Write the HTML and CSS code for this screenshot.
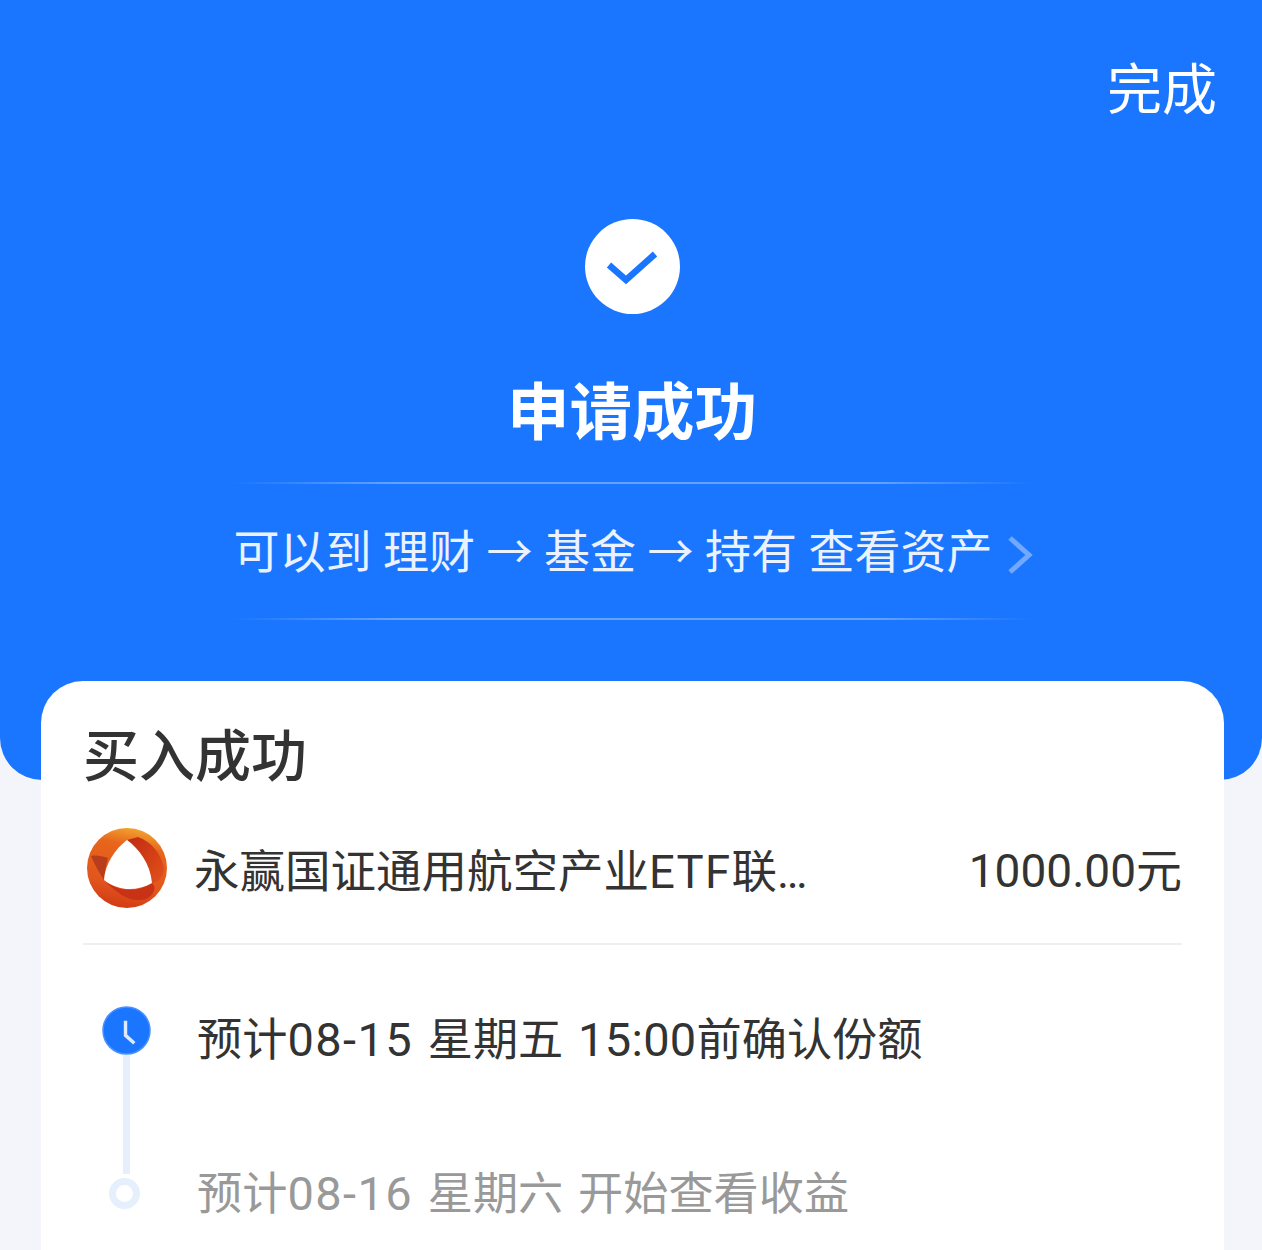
FILE: index.html
```html
<!DOCTYPE html>
<html lang="zh-CN">
<head>
    <meta charset="UTF-8">
    <meta name="viewport" content="width=device-width, initial-scale=1.0">
    <title>申请成功</title>
    <link rel="stylesheet" href="styles.css">
</head>
<body>
    <div class="hero">
        <div class="done">完成</div>
        <div class="check">
            <svg class="check-icon" width="52" height="36" viewBox="0 0 52 36"><path d="M3 15 L20 30 L49 4" fill="none" stroke="#1a76ff" stroke-width="6.5"/></svg>
        </div>
        <h1 class="title">申请成功</h1>
        <div class="tip">
            <span>可以到 理财 → 基金 → 持有 查看资产</span>
            <svg class="tip-arrow" width="26" height="38" viewBox="0 0 26 38"><path d="M3 2 L22 19 L3 36" fill="none" stroke="#72a9ff" stroke-width="5"/></svg>
        </div>
    </div>

    <div class="card">
        <h2 class="card-title">买入成功</h2>
        <div class="fund">
            <svg class="fund-logo" width="82" height="82" viewBox="0 0 82 82">
                <defs>
                    <linearGradient id="ring" x1="0.6" y1="0" x2="0.4" y2="1">
                        <stop offset="0" stop-color="#f2a52e"/>
                        <stop offset="0.22" stop-color="#e8661e"/>
                        <stop offset="0.7" stop-color="#e2561b"/>
                        <stop offset="1" stop-color="#d23a18"/>
                    </linearGradient>
                    <linearGradient id="band" x1="0" y1="0" x2="1" y2="1">
                        <stop offset="0" stop-color="#bf2a14"/>
                        <stop offset="1" stop-color="#e2521b"/>
                    </linearGradient>
                    <filter id="soft"><feGaussianBlur stdDeviation="0.5"/></filter>
                </defs>
                <g filter="url(#soft)">
                    <circle cx="41" cy="41" r="40" fill="url(#ring)"/>
                    <path d="M41 13 L52 10 C66 15 75 27 78 41 C78 50 72 56 66 56 C64 38 54 24 41 13 Z" fill="url(#band)"/>
                    <path d="M66 56 C71 60 68 68 60 72 C46 76 32 68 18 53 C30 64 50 67 66 56 Z" fill="#c83018"/>
                    <path d="M5 29 C9 38 14 47 18 53 C19 44 20 38 22 31 C16 29 10 28 5 29 Z" fill="#b83c1a"/>
                    <path d="M41 13 C53 22 64 36 66 56 C50 65 32 64 18 53 C19 37 29 22 41 13 Z" fill="#fff"/>
                </g>
            </svg>
            <div class="fund-name">永赢国证通用航空产业<span class="latin">ETF</span>联…</div>
            <div class="fund-amount">1000.00元</div>
        </div>
        <div class="steps">
            <div class="step">
                <div class="step-mark">
                    <svg class="clock" width="49" height="49" viewBox="0 0 50 50">
                        <circle cx="25" cy="25" r="24" fill="#1a76ff" stroke="#4a90ff" stroke-width="1.5"/>
                        <path d="M24 15 V30 L33 38" fill="none" stroke="#dfeaff" stroke-width="3.5"/>
                    </svg>
                    <div class="step-line"></div>
                </div>
                <div class="step-text">预计<span class="date">08-15</span> 星期五 <span class="time">15:00</span>前确认份额</div>
            </div>
            <div class="step step-next">
                <div class="step-mark">
                    <div class="ring"></div>
                </div>
                <div class="step-text">预计<span class="date">08-16</span> 星期六 开始查看收益</div>
            </div>
        </div>
    </div>
</body>
</html>
```

FILE: styles.css
```css
html, body {
    margin: 0;
    height: 1250px;
    overflow: hidden;
}
body {
    font-family: Roboto, "Noto Sans CJK SC", sans-serif;
    background: #f4f5fa;
}
.hero {
    height: 780px;
    box-sizing: border-box;
    background: #1a76ff;
    border-radius: 0 0 42px 42px;
    color: white;
    display: flex;
    flex-direction: column;
    align-items: center;
    padding: 55px 0 0 4px;
    font-family: "Noto Sans CJK SC", sans-serif;
}
.done {
    align-self: flex-end;
    margin-right: 45px;
    font-size: 55px;
    line-height: 60px;
}
.check {
    width: 95px;
    height: 95px;
    margin: 104px 2px 0 0;
    border-radius: 50%;
    background: white;
    display: flex;
    justify-content: center;
    align-items: center;
}
.check-icon {
    margin-top: 2px;
}
.title {
    margin: 58px 2px 0 0;
    font-size: 62.5px;
    line-height: 72px;
    font-weight: 700;
}
.tip {
    width: 800px;
    height: 138px;
    margin-top: 38px;
    padding-bottom: 6px;
    box-sizing: border-box;
    border-top: 2px solid;
    border-bottom: 2px solid;
    border-image: linear-gradient(90deg, rgba(255,255,255,0), rgba(255,255,255,0.32) 20%, rgba(255,255,255,0.32) 80%, rgba(255,255,255,0)) 1;
    display: flex;
    justify-content: center;
    align-items: center;
    gap: 14px;
    font-size: 46px;
    word-spacing: 1.2px;
    white-space: nowrap;
    color: #eaf2ff;
}
.tip-arrow {
    margin-top: 14px;
    flex-shrink: 0;
}
.card {
    margin: -99px 38px 0 41px;
    height: 569px;
    box-sizing: border-box;
    background: white;
    border-radius: 42px 42px 0 0;
    position: relative;
    padding: 38px 42px 0;
}
.card-title {
    margin: 0;
    font-family: "Noto Sans CJK SC", sans-serif;
    font-size: 56px;
    line-height: 66px;
    font-weight: 500;
    color: #333;
}
.fund {
    display: flex;
    align-items: center;
    margin-top: 42px;
    height: 82px;
    padding-bottom: 34px;
    border-bottom: 2px solid #eeeff2;
}
.fund-logo {
    margin-left: 3px;
    flex-shrink: 0;
}
.fund-name {
    margin-left: 26px;
    flex: 1;
    font-size: 45.5px;
    color: #333;
}
.latin {
    letter-spacing: 1.3px;
}
.fund-amount {
    margin-top: -3px;
    font-size: 46px;
    color: #333;
}
.steps {
    margin-top: 61px;
}
.step {
    display: flex;
    height: 154px;
}
.step-next {
    height: 67px;
}
.step-mark {
    width: 50px;
    margin-left: 18px;
    display: flex;
    flex-direction: column;
    align-items: center;
}
.step-line {
    width: 7px;
    height: 119px;
    flex-shrink: 0;
    background: #e6f0fd;
}
.clock {
    flex-shrink: 0;
}
.ring {
    width: 17px;
    height: 17px;
    margin: 18px 4px 0 0;
    border: 7px solid #e6f0fd;
    border-radius: 50%;
}
.step-text {
    margin: 1px 0 0 46px;
    font-size: 45.2px;
    line-height: 66px;
    word-spacing: 3.5px;
    color: #333;
}
.date {
    font-size: 47px;
    letter-spacing: 1.4px;
}
.time {
    font-size: 47px;
    letter-spacing: 0.3px;
}
.step-next .step-text {
    color: #999;
}
```
